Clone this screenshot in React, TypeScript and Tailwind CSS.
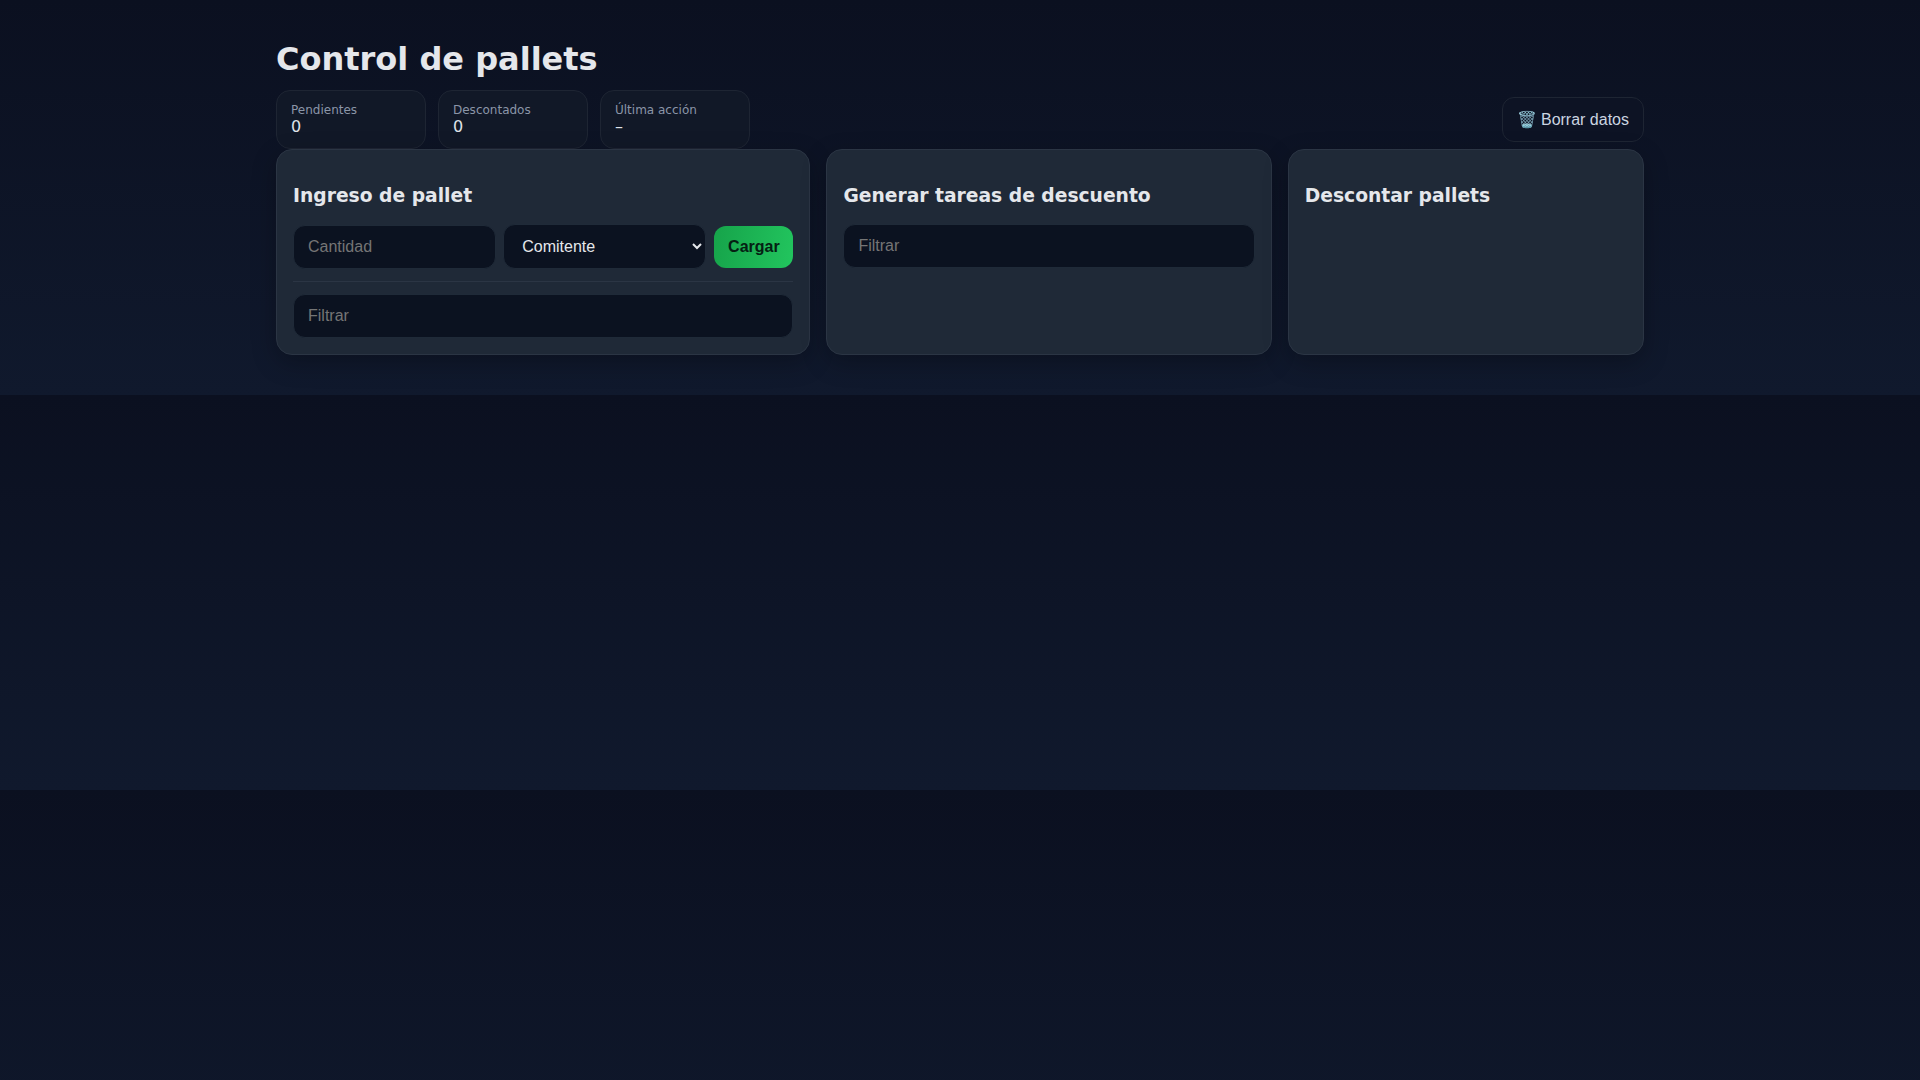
const statCard = "w-[150px] h-[59px] rounded-[14px] border border-[#1e2533] bg-[#111827] px-[14px] pt-[12px] font-['DejaVu_Sans',sans-serif]";
const panel = "rounded-[16px] border border-[#2b3544] bg-[#1f2937] p-4 shadow-[0_8px_24px_rgba(0,0,0,0.25)]";
const panelTitle = "mt-[19px] mb-[17px] text-[18.72px] leading-[22px] font-bold text-[#e5e7eb] font-['DejaVu_Sans',sans-serif]";
const field = "h-[44px] w-full rounded-[12px] border border-[#1f2a38] bg-[#0b1220] px-[14px] text-[16px] text-[#e5e7eb] placeholder:text-[#757575] outline-none font-['Liberation_Sans',sans-serif]";

const stats = [
  { label: "Pendientes", value: "0" },
  { label: "Descontados", value: "0" },
  { label: "Última acción", value: "–" },
];

export default function App() {
  return (
    <div className="min-h-screen bg-[linear-gradient(180deg,#0b1020,#10192d)] bg-[length:100%_395px]">
      <div className="mx-auto max-w-[1400px] px-4 pt-[41px] pb-10">
        <h1 className="mb-[12px] text-[32px] leading-[37px] font-bold text-[#e5e7eb] font-['DejaVu_Sans',sans-serif]">
          Control de pallets
        </h1>

        <div className="flex items-center justify-between">
          <div className="flex gap-3">
            {stats.map((s) => (
              <div key={s.label} className={statCard}>
                <div className="text-[12px] leading-[14px] text-[#8b95a7]">{s.label}</div>
                <div className="text-[16px] leading-[19px] text-[#dfe3ea]">{s.value}</div>
              </div>
            ))}
          </div>
          <button className="h-[45px] rounded-[12px] border border-[#1e2533] bg-[#0d1324] px-[14px] pt-px text-[16px] text-[#cbd5e1] font-['Liberation_Sans',sans-serif]">
            🗑️ Borrar datos
          </button>
        </div>

        <div className="grid grid-cols-[1.2fr_1fr_0.8fr] gap-4">
          <section className={panel}>
            <h2 className={panelTitle}>Ingreso de pallet</h2>
            <div className="flex items-end gap-2">
              <input className={`${field} flex-1 min-w-0`} placeholder="Cantidad" />
              <select className="-ml-px h-[45px] flex-1 min-w-0 rounded-[12px] border border-[#1f2a38] bg-[#0b1220] px-[14px] text-[16px] text-[#e5e7eb] outline-none font-['Liberation_Sans',sans-serif]">
                <option>Comitente</option>
              </select>
              <button className="mb-px h-[42px] w-[79px] shrink-0 rounded-[12px] bg-[linear-gradient(100deg,#16a34a,#22c55e)] text-[16px] font-bold text-[#052013] font-['Liberation_Sans',sans-serif]">
                Cargar
              </button>
            </div>
            <div className="my-3 border-t border-[#2b3544]" />
            <input className={field} placeholder="Filtrar" />
          </section>

          <section className={panel}>
            <h2 className={panelTitle}>Generar tareas de descuento</h2>
            <input className={field} placeholder="Filtrar" />
          </section>

          <section className={panel}>
            <h2 className={panelTitle}>Descontar pallets</h2>
          </section>
        </div>
      </div>
    </div>
  );
}
